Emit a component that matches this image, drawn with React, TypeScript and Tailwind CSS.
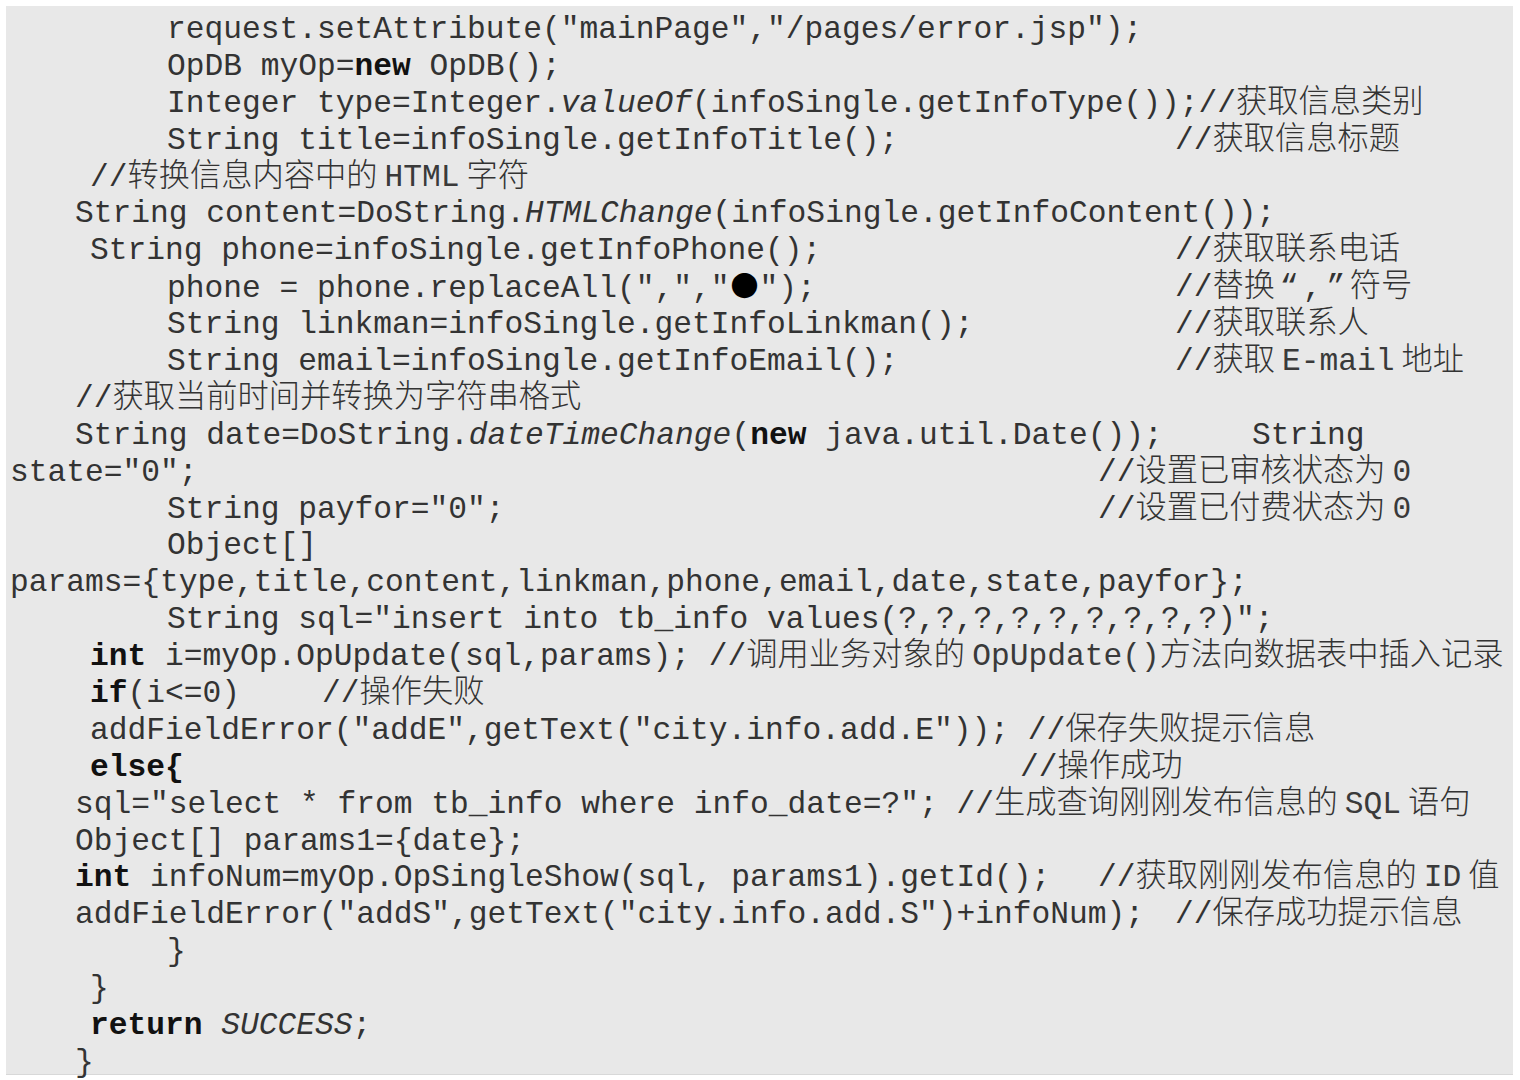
import { FC, ReactNode } from "react";

type Line = {
  pad: string;
  width?: string;
  code: ReactNode;
  comment?: ReactNode;
  last?: boolean;
};

const B: FC<{ children: ReactNode }> = ({ children }) => (
  <span className="font-bold text-[#111]">{children}</span>
);

const I: FC<{ children: ReactNode }> = ({ children }) => <span className="italic">{children}</span>;

// latin word inside a CJK comment, with narrow gaps round it
const W: FC<{ children: ReactNode; after?: boolean }> = ({ children, after = true }) => (
  <span className="pl-[7px] font-['Liberation_Mono'] font-normal text-[#3a3a3a]">
    {children}
    {after && <span className="inline-block w-[7px]" />}
  </span>
);

// left padding is measured from the panel edge (x=6)
const lines: Line[] = [
  { pad: "pl-[161px]", code: 'request.setAttribute("mainPage","/pages/error.jsp");' },
  {
    pad: "pl-[161px]",
    code: (
      <>
        OpDB myOp=<B>new</B> OpDB();
      </>
    ),
  },
  {
    pad: "pl-[161px]",
    code: (
      <>
        Integer type=Integer.<I>valueOf</I>(infoSingle.getInfoType());//获取信息类别
      </>
    ),
  },
  { pad: "pl-[161px]", width: "w-[1169px]", code: "String title=infoSingle.getInfoTitle();", comment: "//获取信息标题" },
  {
    pad: "pl-[84px]",
    code: (
      <>
        //转换信息内容中的<W>HTML</W>字符
      </>
    ),
  },
  {
    pad: "pl-[69px]",
    code: (
      <>
        String content=DoString.<I>HTMLChange</I>(infoSingle.getInfoContent());
      </>
    ),
  },
  { pad: "pl-[84px]", width: "w-[1169px]", code: "String phone=infoSingle.getInfoPhone();", comment: "//获取联系电话" },
  {
    pad: "pl-[161px]",
    width: "w-[1169px]",
    code: (
      <>
        phone = phone.replaceAll(",","
        <span className="inline-block w-[30px] text-center font-['Noto_Sans_CJK_SC'] text-[28px] leading-[30px] text-black">●</span>
        ");
      </>
    ),
    comment: (
      <>
        //替换<span className="inline-block w-[28px] text-center">“</span>,
        <span className="inline-block w-[28px] text-center">”</span>符号
      </>
    ),
  },
  { pad: "pl-[161px]", width: "w-[1169px]", code: "String linkman=infoSingle.getInfoLinkman();", comment: "//获取联系人" },
  {
    pad: "pl-[161px]",
    width: "w-[1169px]",
    code: "String email=infoSingle.getInfoEmail();",
    comment: (
      <>
        //获取<W>E-mail</W>地址
      </>
    ),
  },
  { pad: "pl-[69px]", code: "//获取当前时间并转换为字符串格式" },
  {
    pad: "pl-[69px]",
    width: "w-[1246px]",
    code: (
      <>
        String date=DoString.<I>dateTimeChange</I>(<B>new</B> java.util.Date());
      </>
    ),
    comment: "String",
  },
  {
    pad: "pl-[4px]",
    width: "w-[1092px]",
    code: 'state="0";',
    comment: (
      <>
        //设置已审核状态为<W after={false}>0</W>
      </>
    ),
  },
  {
    pad: "pl-[161px]",
    width: "w-[1092px]",
    code: 'String payfor="0";',
    comment: (
      <>
        //设置已付费状态为<W after={false}>0</W>
      </>
    ),
  },
  { pad: "pl-[161px]", code: "Object[]" },
  { pad: "pl-[4px]", code: "params={type,title,content,linkman,phone,email,date,state,payfor};" },
  { pad: "pl-[161px]", code: 'String sql="insert into tb_info values(?,?,?,?,?,?,?,?,?)";' },
  {
    pad: "pl-[84px]",
    code: (
      <>
        <B>int</B> i=myOp.OpUpdate(sql,params); //调用业务对象的<W after={false}>OpUpdate()</W>方法向数据表中插入记录
      </>
    ),
  },
  {
    pad: "pl-[84px]",
    width: "w-[316px]",
    code: (
      <>
        <B>if</B>(i&lt;=0)
      </>
    ),
    comment: "//操作失败",
  },
  { pad: "pl-[84px]", code: 'addFieldError("addE",getText("city.info.add.E")); //保存失败提示信息' },
  { pad: "pl-[84px]", width: "w-[1014px]", code: <B>{"else{"}</B>, comment: "//操作成功" },
  {
    pad: "pl-[69px]",
    code: (
      <>
        sql="select * from tb_info where info_date=?"; //生成查询刚刚发布信息的<W>SQL</W>语句
      </>
    ),
  },
  { pad: "pl-[69px]", code: "Object[] params1={date};" },
  {
    pad: "pl-[69px]",
    width: "w-[1092px]",
    code: (
      <>
        <B>int</B> infoNum=myOp.OpSingleShow(sql, params1).getId();
      </>
    ),
    comment: (
      <>
        //获取刚刚发布信息的<W>ID</W>值
      </>
    ),
  },
  {
    pad: "pl-[69px]",
    width: "w-[1169px]",
    code: 'addFieldError("addS",getText("city.info.add.S")+infoNum);',
    comment: "//保存成功提示信息",
  },
  { pad: "pl-[161px]", code: "}" },
  { pad: "pl-[84px]", code: "}" },
  {
    pad: "pl-[84px]",
    code: (
      <>
        <B>return</B> <I>SUCCESS</I>;
      </>
    ),
  },
  { pad: "pl-[69px]", code: "}", last: true },
];

const App: FC = () => {
  return (
    <div className="w-[1520px] h-[1080px] bg-white pt-[6px] pl-[6px]">
      <div className="w-[1507px] h-[1069px] bg-[#e8e8e8] border-b border-[#d8d8d8] pt-[6px]">
        <div className="font-['Liberation_Mono','Noto_Sans_CJK_SC',monospace] font-light text-[31.25px] leading-[36.9px] text-[#333] whitespace-pre">
          {lines.map((line, i) => (
            <div key={i} className={`flex ${line.last ? "h-[30px]" : "h-[36.9px]"}`}>
              <span className={`${line.pad} ${line.width ?? ""} shrink-0`}>{line.code}</span>
              {line.comment && <span>{line.comment}</span>}
            </div>
          ))}
        </div>
      </div>
    </div>
  );
};

export default App;
